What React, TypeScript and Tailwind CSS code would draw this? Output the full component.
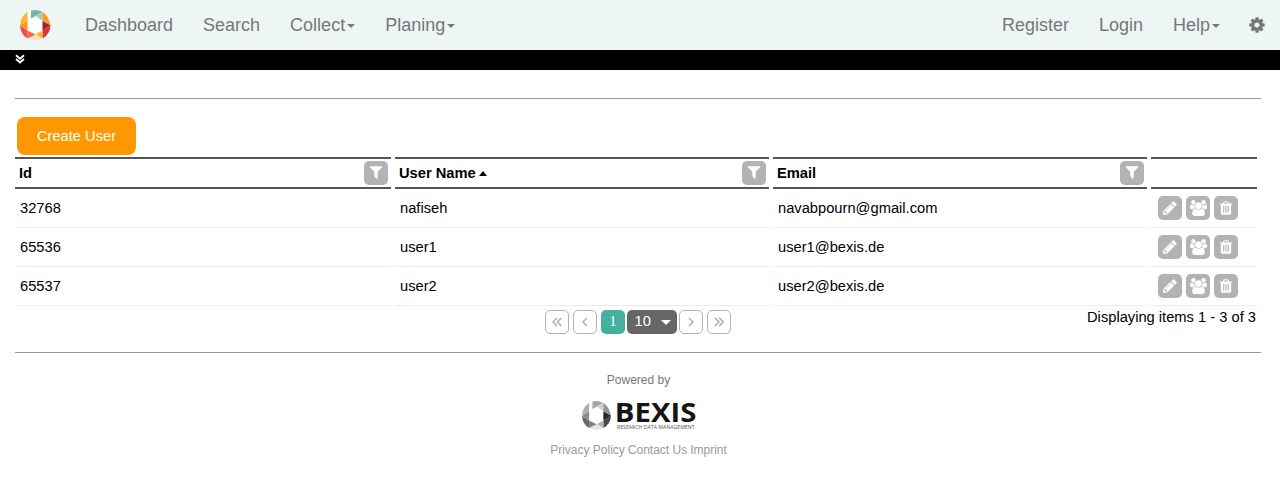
import type { ReactNode } from 'react';

const icons = {
  cog: 'M1152 896q0-106-75-181t-181-75-181 75-75 181 75 181 181 75 181-75 75-181zm512-109v222q0 12-8 23t-20 13l-185 28q-19 54-39 91 35 50 107 138 10 12 10 25t-9 23q-27 37-99 108t-94 71q-12 0-26-9l-138-108q-44 23-91 38-16 136-29 186-7 28-36 28h-222q-14 0-24.5-8.5t-11.5-21.5l-28-184q-49-16-90-37l-141 107q-10 9-25 9-14 0-25-11-126-114-165-168-7-10-7-23 0-12 8-23 15-21 51-66.5t54-70.5q-27-50-41-99l-183-27q-13-2-21-12.5t-8-23.5v-222q0-12 8-23t19-13l186-28q14-46 39-92-40-57-107-138-10-12-10-24 0-10 9-23 26-36 98.5-107.5t94.5-71.5q13 0 26 10l138 107q44-23 91-38 16-136 29-186 7-28 36-28h222q14 0 24.5 8.5t11.5 21.5l28 184q49 16 90 37l142-107q9-9 24-9 13 0 25 10 129 119 165 170 7 8 7 22 0 12-8 23-15 21-51 66.5t-54 70.5q26 50 41 98l183 28q13 2 21 12.5t8 23.5z',
  filter: 'M1595 295q17 41-14 70l-493 493v742q0 42-39 59-13 5-25 5-27 0-45-19l-256-256q-19-19-19-45v-486l-493-493q-31-29-14-70 17-39 59-39h1280q42 0 59 39z',
  pencil: 'M491 1536l91-91-235-235-91 91v107h128v128h107zm523-928q0-22-22-22-10 0-17 7l-542 542q-7 7-7 17 0 22 22 22 10 0 17-7l542-542q7-7 7-17zm-54-192l416 416-832 832h-416v-416zm683 96q0 53-37 90l-166 166-416-416 166-165q36-38 90-38 53 0 91 38l235 234q37 39 37 91z',
  trash: 'M704 1376v-704q0-14-9-23t-23-9h-64q-14 0-23 9t-9 23v704q0 14 9 23t23 9h64q14 0 23-9t9-23zm256 0v-704q0-14-9-23t-23-9h-64q-14 0-23 9t-9 23v704q0 14 9 23t23 9h64q14 0 23-9t9-23zm256 0v-704q0-14-9-23t-23-9h-64q-14 0-23 9t-9 23v704q0 14 9 23t23 9h64q14 0 23-9t9-23zm-544-992h448l-48-117q-7-9-17-11h-317q-10 2-17 11zm928 32v64q0 14-9 23t-23 9h-96v948q0 83-47 143.5t-113 60.5h-832q-66 0-113-58.5t-47-141.5v-952h-96q-14 0-23-9t-9-23v-64q0-14 9-23t23-9h309l70-167q15-37 54-63t79-26h320q40 0 79 26t54 63l70 167h309q14 0 23 9t9 23z',
  group: 'M529 896q-162 5-265 128h-134q-82 0-138-40.5t-56-118.5q0-353 124-353 6 0 43.5 21t97.5 42.5 119 21.5q67 0 133-23-5 37-5 66 0 139 81 256zm1071 637q0 120-73 189.5t-194 69.5h-874q-121 0-194-69.5t-73-189.5q0-53 3.5-103.5t14-109 26.5-108.5 43-97.5 62-81 85.5-53.5 111.5-20q10 0 43 21.5t73 48 107 48 135 21.5 135-21.5 107-48 73-48 43-21.5q61 0 111.5 20t85.5 53.5 62 81 43 97.5 26.5 108.5 14 109 3.5 103.5zm-1024-1277q0 106-75 181t-181 75-181-75-75-181 75-181 181-75 181 75 75 181zm704 384q0 159-112.5 271.5t-271.5 112.5-271.5-112.5-112.5-271.5 112.5-271.5 271.5-112.5 271.5 112.5 112.5 271.5zm576 225q0 78-56 118.5t-138 40.5h-134q-103-123-265-128 81-117 81-256 0-29-5-66 66 23 133 23 59 0 119-21.5t97.5-42.5 43.5-21q124 0 124 353zm-128-609q0 106-75 181t-181 75-181-75-75-181 75-181 181-75 181 75 75 181z',
};

function Icon({ name, className }: { name: keyof typeof icons; className: string }) {
  return (
    <svg viewBox={name === 'group' ? '-64 0 1920 1792' : '0 0 1792 1792'} className={className} fill="currentColor">
      <path d={icons[name]} />
    </svg>
  );
}

const ringColors = ['#78b3a3', '#9dd0bb', '#f79a2a', '#9b2335', '#e72f31', '#fbb731', '#fee0bc', '#f1703a', '#ea5050', '#f79a2a', '#fbb731'];
const ringGreys = ['#a5a5a5', '#cfcfcf', '#949494', '#242424', '#484848', '#b4b4b4', '#e5e5e5', '#838383', '#696969', '#8c8c8c', '#b0b0b0'];
const ringShapes = [
  'M11 0.5Q14 -0.2 17.5 0.2L22.5 2L11 8.5Z',
  'M22.5 2V11L16 6Z',
  'M22.5 2Q28.5 5.5 30.5 15.5L22.5 11Z',
  'M22.5 11L30.5 15.5L22.5 20.5Z',
  'M30.5 15.5Q30 24 22.5 28.5V20.5Z',
  'M22.5 20.5V28.5L15.5 24.5Z',
  'M15.5 24.5L22.5 28.5Q15.5 32 8 28.5Z',
  'M7.5 20.5L15.5 24.5L7.5 28.5Z',
  'M0 15.5L7.5 20.5V28.5Q0.5 24.5 0 15.5Z',
  'M0 15.5L7.5 10.5V20.5Z',
  'M7.5 2V10.5L0 15.5Q0.5 6 7.5 2Z',
];

function Ring({ colors, className }: { colors: string[]; className: string }) {
  return (
    <svg viewBox="0 0 30.5 30.5" className={className}>
      <path d="M7.5 2L11 0.5V8.5L16 6L22.5 11V20.5L15.5 24.5L7.5 20.5Z" fill="white" />
      {ringShapes.map((d, i) => (
        <path key={d} d={d} fill={colors[i]} />
      ))}
    </svg>
  );
}

function Caret() {
  return <span className="mt-px h-0 w-0 border-x-4 border-t-4 border-x-transparent border-t-[#777]" />;
}

function Tile({ name }: { name: keyof typeof icons }) {
  return (
    <span className="flex h-6 w-6 items-center justify-center rounded-[5px] bg-[#b3b3b3] pb-px text-white">
      <Icon name={name} className={name === 'group' ? 'h-4 w-[17px]' : name === 'filter' ? 'mb-px h-4 w-4' : 'h-4 w-4'} />
    </span>
  );
}

function PageButton({ d }: { d: string }) {
  return (
    <span className="flex h-6 w-6 items-center justify-center rounded-[5px] border border-[#b3b3b3] text-[#aaa]">
      <svg viewBox="0 0 12 12" className="h-3 w-3" fill="none" stroke="currentColor" strokeWidth="1.4">
        <path d={d} />
      </svg>
    </span>
  );
}

function HeadCell({ children, filter }: { children?: ReactNode; filter?: boolean }) {
  return (
    <div className="flex h-8 items-center justify-between border-y-2 border-[#555] pr-[3px] pl-1 font-bold">
      <span className="flex items-center">{children}</span>
      {filter && <Tile name="filter" />}
    </div>
  );
}

const users = [
  ['32768', 'nafiseh', 'navabpourn@gmail.com'],
  ['65536', 'user1', 'user1@bexis.de'],
  ['65537', 'user2', 'user2@bexis.de'],
];

export default function App() {
  return (
    <div className="h-[501px] overflow-hidden bg-white font-['Liberation_Sans',Arial,sans-serif] text-[14.7px] leading-5 text-black">
      <nav className="flex h-[50px] items-center bg-[#eef6f5] text-lg text-[#777]">
        <Ring colors={ringColors} className="ml-5 h-[30.5px] w-[30.5px]" />
        <div className="ml-[34.5px] flex gap-[30px]">
          <a>Dashboard</a>
          <a>Search</a>
          <a className="flex items-center gap-0.5">Collect<Caret /></a>
          <a className="flex items-center gap-0.5">Planing<Caret /></a>
        </div>
        <div className="mr-[14px] ml-auto flex items-center gap-[30px]">
          <a>Register</a>
          <a>Login</a>
          <a className="flex items-center gap-0.5">Help<Caret /></a>
          <Icon name="cog" className="-ml-[2px] h-[18px] w-[18px]" />
        </div>
      </nav>
      <div className="h-5 bg-black pt-1 pl-[15px] text-white">
        <svg viewBox="0 0 10 10" className="h-[10px] w-[10px]" fill="none" stroke="currentColor" strokeWidth="1.8">
          <path d="M1 1.2L5 4.7L9 1.2M1 5L5 8.5L9 5" />
        </svg>
      </div>

      <main className="mr-[19px] ml-[15px] pt-7">
        <hr className="border-[#999]" />
        <button className="mt-[18px] ml-0.5 block h-[38px] w-[119px] rounded-lg bg-[#ff9800] text-white">Create User</button>
        <div className="mt-0.5 grid w-[1242px] grid-cols-[376px_374px_374px_106px] gap-x-1">
          <HeadCell filter>Id</HeadCell>
          <HeadCell filter>
            User Name
            <span className="ml-[3.5px] h-0 w-0 border-x-[4.5px] border-b-[5px] border-x-transparent border-b-black" />
          </HeadCell>
          <HeadCell filter>Email</HeadCell>
          <HeadCell />
          {users.map((user) => (
            <div key={user[0]} className="contents">
              {user.map((value) => (
                <div key={value} className="flex h-[39px] items-center border-b border-[#ebebeb] pl-[5px]">{value}</div>
              ))}
              <div className="flex h-[39px] items-center gap-1 border-b border-[#ebebeb] pl-[7px]">
                <Tile name="pencil" />
                <Tile name="group" />
                <Tile name="trash" />
              </div>
            </div>
          ))}
        </div>
        <div className="grid h-[46px] w-[1242px] grid-cols-[530px_1fr_auto] pt-1">
          <span />
          <div className="flex h-6">
            <PageButton d="M6 2L2 6L6 10M10.3 2L6.3 6L10.3 10" />
            <span className="w-1" />
            <PageButton d="M8 2L4 6L8 10" />
            <span className="w-1" />
            <span className="flex h-6 w-6 items-center justify-center rounded-[5px] bg-[#46b09f] pb-0.5 font-['Liberation_Serif',serif] text-white">1</span>
            <span className="ml-0.5 flex h-6 w-[50px] items-center justify-between rounded-[5px] bg-[#666] pr-[6px] pb-0.5 pl-[7.5px] text-white">
              10
              <span className="mt-[3px] h-0 w-0 border-x-[5px] border-t-[5px] border-x-transparent border-t-white" />
            </span>
            <span className="w-0.5" />
            <PageButton d="M4 2L8 6L4 10" />
            <span className="w-1" />
            <PageButton d="M2 2L6 6L2 10M6.3 2L10.3 6L6.3 10" />
          </div>
          <span className="-mt-[3px] h-5 pr-px">Displaying items 1 - 3 of 3</span>
        </div>
        <hr className="border-[#999]" />
      </main>

      <footer className="mr-[3px] flex flex-col items-center pt-[17px] text-xs text-[#777]">
        <span className="leading-5">Powered by</span>
        <div className="mt-[10px] flex h-[30px] w-[114px] items-center">
          <Ring colors={ringGreys} className="h-[29px] w-[29px] shrink-0" />
          <svg viewBox="0 0 80 30" className="ml-[5px] h-[30px] w-20 shrink-0 overflow-visible">
            <text x="-1.2" y="22" textLength="81.5" lengthAdjust="spacingAndGlyphs" className="fill-[#151515] font-['Open_Sans',sans-serif] text-[27.5px] font-bold">BEXIS</text>
            <text x="1" y="28.8" textLength="77.5" lengthAdjust="spacingAndGlyphs" className="fill-[#555] font-['Open_Sans',sans-serif] text-[5.5px]">RESEARCH DATA MANAGEMENT</text>
          </svg>
        </div>
        <div className="mt-[10px] flex gap-[3px] leading-5 text-[#999]">
          <a>Privacy Policy</a>
          <a>Contact Us</a>
          <a>Imprint</a>
        </div>
      </footer>
    </div>
  );
}
